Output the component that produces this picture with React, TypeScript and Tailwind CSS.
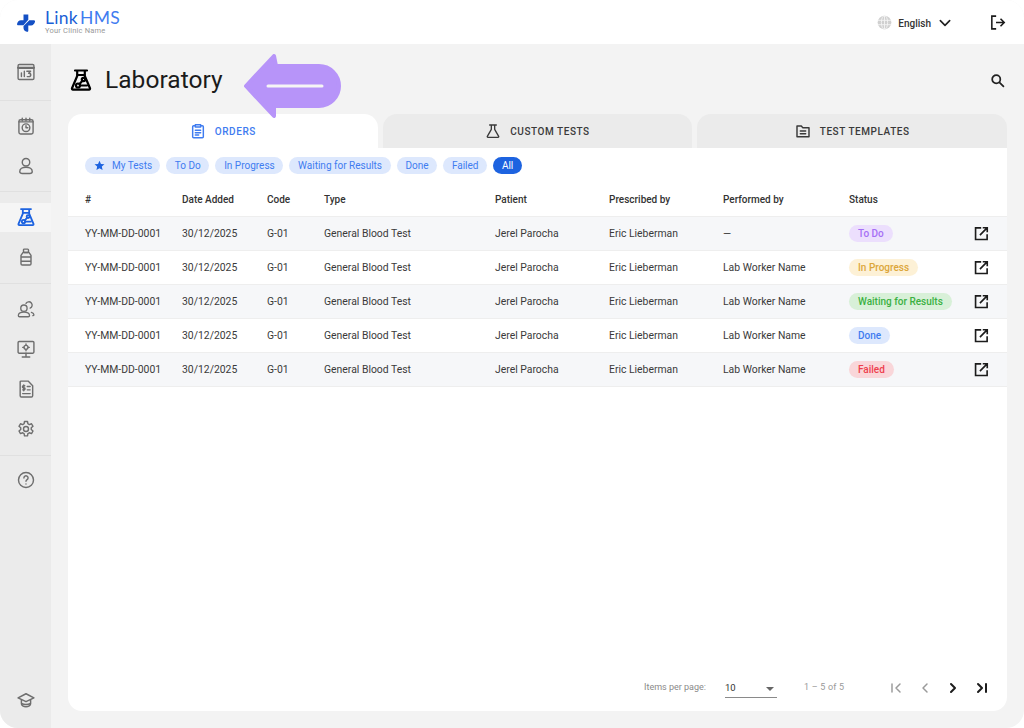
import React from "react";

type P = { className?: string };

const Svg = ({ className, children, sw = 1.8 }: P & { children: React.ReactNode; sw?: number }) => (
  <svg viewBox="0 0 24 24" fill="none" stroke="currentColor" strokeWidth={sw} strokeLinecap="round" strokeLinejoin="round" className={className}>
    {children}
  </svg>
);

const LabFlask = ({ className, sw = 2.2 }: P & { sw?: number }) => (
  <Svg className={className} sw={sw}>
    <path d="M6 2.500h12M8.200 2.500v5.500L3 20.300a1 1 0 0 0 .9 1.400h16.200a1 1 0 0 0 .9-1.400L15.800 8V2.500" />
    <path d="M8.500 7h7" />
    <circle cx="9" cy="17.500" r="2" />
    <circle cx="14.500" cy="11.500" r="1.700" />
    <path d="M10.500 16l3-3.200M11 17.500h7" />
  </Svg>
);

const navIcons = {
  chart: (
    <Svg className="w-[20px] h-[20px]" sw={1.7}>
      <rect x="2.500" y="3" width="19" height="18" rx="1.500" />
      <path d="M2.500 7h19" strokeWidth="2.600" />
      <path d="M6.500 13v4.500M10 11v6.500M13 11h4.500l-2.300 2.500c1.600 0 2.500.8 2.500 2s-1 2-2.400 2H13.500" />
    </Svg>
  ),
  clock: (
    <Svg className="w-[20px] h-[20px]" sw={1.7}>
      <rect x="3.500" y="4.500" width="17" height="17" rx="2" />
      <path d="M7.500 2.500v3M12 2.500v3M16.500 2.500v3M3.500 7h17" />
      <circle cx="12" cy="14" r="4.600" />
      <path d="M12 11.500V14h2.200" />
    </Svg>
  ),
  user: (
    <Svg className="w-[20px] h-[20px]" sw={1.7}>
      <circle cx="12" cy="7.500" r="4.500" />
      <path d="M4.500 18.500c0-3 3.200-5 7.500-5s7.500 2 7.500 5c0 1.500-1.200 2.500-3 2.500h-9c-1.800 0-3-1-3-2.500Z" />
    </Svg>
  ),
  bottle: (
    <Svg className="w-[20px] h-[20px]" sw={1.7}>
      <rect x="9" y="2.500" width="6" height="4" rx="1" />
      <path d="M8.500 6.500h7L18 10v10a1.500 1.500 0 0 1-1.500 1.500h-9A1.500 1.500 0 0 1 6 20V10ZM6 12h12M6 17h12" />
    </Svg>
  ),
  people: (
    <Svg className="w-[20px] h-[20px]" sw={1.6}>
      <circle cx="9.500" cy="11" r="3.800" />
      <path d="M2.800 20c0-2.500 2.800-4.200 6.700-4.200s6.700 1.700 6.700 4.200c0 .8-.6 1.300-1.500 1.300H4.300c-.9 0-1.500-.5-1.500-1.300Z" />
      <path d="M12 5.200A4 4 0 1 1 17 11M18.500 16c1.800.5 3 1.600 3 2.800 0 .8-.5 1.200-1.300 1.200" />
    </Svg>
  ),
  monitor: (
    <Svg className="w-[20px] h-[20px]" sw={1.7}>
      <rect x="2.500" y="3" width="19" height="14" rx="1.300" />
      <path d="M12 17v4M7.500 21.500h9" />
      <circle cx="12" cy="10" r="2.400" />
      <path d="M12 6v1.500M12 12.500V14M8 10h1.500M14.500 10H16" />
    </Svg>
  ),
  invoice: (
    <Svg className="w-[20px] h-[20px]" sw={1.7}>
      <path d="M6 2.500h8.500L20 8v12a1.500 1.500 0 0 1-1.500 1.500h-12A1.500 1.500 0 0 1 5 20V3.500a1 1 0 0 1 1-1Z" />
      <path d="M13.500 9h3.500M13.500 13h3.500M8 17.500h9M10.500 8H9a1.200 1.200 0 0 0 0 2.500h.6a1.200 1.200 0 0 1 0 2.500H8M9.300 7v7" />
    </Svg>
  ),
  gear: (
    <Svg className="w-[20px] h-[20px]" sw={1.7}>
      <circle cx="12" cy="12" r="3" />
      <path d="M10.200 3h3.600l.5 2.700 1.700 1 2.600-1 1.800 3.100-2.100 1.800v2l2.100 1.800-1.800 3.100-2.600-1-1.700 1-.5 2.700h-3.600l-.5-2.700-1.700-1-2.600 1-1.800-3.100 2.100-1.800v-2L3.600 8.800l1.800-3.100 2.600 1 1.700-1Z" />
    </Svg>
  ),
  help: (
    <Svg className="w-[20px] h-[20px]" sw={1.7}>
      <circle cx="12" cy="12" r="9" />
      <path d="M9.500 9.500a2.500 2.500 0 1 1 3.800 2.100c-.8.500-1.300 1-1.300 2" />
      <path d="M12 16.800v.1" />
    </Svg>
  ),
  cap: (
    <Svg className="w-[20px] h-[20px]" sw={1.8}>
      <path d="M12 4.500 2.500 9.500 12 14l9.500-4.500Z" />
      <path d="M6.500 12v4.500c0 1.800 2.500 3.500 5.500 3.500s5.500-1.700 5.500-3.500V12M6.500 16c3 1.500 8 1.500 11 0" />
    </Svg>
  ),
};

const NavItem = ({ icon, active }: { icon: React.ReactNode; active?: boolean }) => (
  <div className="h-10 flex items-center">
    <div className={`w-full h-[29px] flex items-center justify-center ${active ? "bg-[#f5f5f5]" : ""}`}>{icon}</div>
  </div>
);

const filters = ["To Do", "In Progress", "Waiting for Results", "Done", "Failed"];

const rows = [
  { by: "—", status: "To Do", cls: "bg-[#ecdffd] text-[#a66ff5]" },
  { by: "Lab Worker Name", status: "In Progress", cls: "bg-[#fdf1d6] text-[#dca63a]" },
  { by: "Lab Worker Name", status: "Waiting for Results", cls: "bg-[#d8f0d8] text-[#3bb043]" },
  { by: "Lab Worker Name", status: "Done", cls: "bg-[#dde8fd] text-[#3f7cf0]" },
  { by: "Lab Worker Name", status: "Failed", cls: "bg-[#f9d6d9] text-[#ee3f4d]" },
];

const cols = "grid grid-cols-[97px_85px_57px_171px_114px_114px_126px_125px_1fr] items-center pl-[17px]";

const Tab = ({ icon, label, active }: { icon: React.ReactNode; label: string; active?: boolean }) => (
  <div
    className={`flex-1 h-[34px] rounded-t-[14px] flex items-center justify-center gap-[9px] text-[10px] font-medium tracking-[0.55px] ${
      active ? "bg-white text-[#3f7cf0]" : "bg-[#ebebeb] text-[#3a3a3a]"
    }`}
  >
    {icon}
    <span className="pt-[1px]">{label}</span>
  </div>
);

export default function App() {
  return (
    <div className="w-[1024px] h-[728px] bg-white overflow-hidden relative" style={{ fontFamily: "Roboto, sans-serif" }}>
      <div className="w-full h-full rounded-[18px] overflow-hidden flex flex-col bg-[#f3f3f3]">
        <header className="h-[44px] bg-white flex items-center shrink-0">
          <div className="flex items-center ml-[17px]">
            <svg viewBox="0 0 18 18" className="w-[18px] h-[18px] mt-[1px]">
              <path d="M6.500 0.500h4.800v5.200L6.500 11.300H1.300c-.9 0-1.400-.7-1.200-1.500C.5 7.900 1.900 6.200 4 6.200h2.500Z" fill="#1450c4" />
              <path d="M12.300 6.300h4.600c.9 0 1.300.6 1.100 1.400-.5 2-1.900 3.700-4 3.700h-2.700v5.300c0 .9-.7 1.400-1.500 1.100-1.900-.6-3.300-2-3.300-3.900v-2Z" fill="#1450c4" />
            </svg>
            <div className="ml-[10px] flex flex-col">
              <div className="text-[17.500px] leading-[17px] tracking-[0.3px]" style={{ fontFamily: "Lato, sans-serif" }}>
                <span className="text-[#1b5fd6]">Link</span>
                <span className="text-[#3f7cf0] ml-[2px]">HMS</span>
              </div>
              <div className="text-[7.500px] leading-[9px] tracking-[0.2px] text-[#9a9a9a]">Your Clinic Name</div>
            </div>
          </div>
          <div className="ml-auto flex items-center pt-[1px]">
            <svg viewBox="0 0 24 24" className="w-[15px] h-[15px]" fill="none" strokeWidth="1.500">
              <circle cx="12" cy="12" r="11" fill="#d0d0d0" />
              <ellipse cx="12" cy="12" rx="5" ry="11" stroke="#f3f3f3" />
              <path d="M1 8.500h22M1 15.500h22M12 1v22" stroke="#f3f3f3" />
            </svg>
            <span className="ml-[6px] text-[10px] font-medium text-[#333] pt-[1px]">English</span>
            <svg viewBox="0 0 24 24" className="ml-[7px] w-[14px] h-[14px] text-[#222]" fill="none" stroke="currentColor" strokeWidth="2.800" strokeLinecap="round" strokeLinejoin="round">
              <path d="M4 8l8 8 8-8" />
            </svg>
            <svg viewBox="0 0 24 24" className="ml-[37px] mr-[18px] w-[17px] h-[17px] text-[#1c1c1c]" fill="none" stroke="currentColor" strokeWidth="2.200" strokeLinecap="square" strokeLinejoin="miter">
              <path d="M9 3H4v18h5M11 12h10M17 7.500l4.500 4.500-4.500 4.500" />
            </svg>
          </div>
        </header>

        <div className="flex-1 flex min-h-0">
          <aside className="w-[51px] shrink-0 bg-[#ebebeb] flex flex-col text-[#6e6e6e]">
            <div className="h-[57px] border-b border-[#e0e0e0] flex items-center justify-center">{navIcons.chart}</div>
            <div className="pt-[5px] pb-[5px] border-b border-[#e0e0e0]">
              <NavItem icon={navIcons.clock} />
              <NavItem icon={navIcons.user} />
            </div>
            <div className="pt-[5px] pb-[6px] border-b border-[#e0e0e0]">
              <NavItem active icon={<LabFlask className="w-[20px] h-[20px] text-[#1d63e0]" />} />
              <NavItem icon={navIcons.bottle} />
            </div>
            <div className="pt-[5px] pb-[6px] border-b border-[#e0e0e0]">
              <NavItem icon={navIcons.people} />
              <NavItem icon={navIcons.monitor} />
              <NavItem icon={navIcons.invoice} />
              <NavItem icon={navIcons.gear} />
            </div>
            <div className="pt-[4px]">
              <NavItem icon={navIcons.help} />
            </div>
            <div className="mt-auto pb-[8px]">
              <NavItem icon={navIcons.cap} />
            </div>
          </aside>

          <main className="flex-1 min-w-0 pl-[17px] pr-[17px] pb-[17px] flex flex-col">
            <div className="h-[70px] shrink-0 flex items-center pt-[2px]">
              <LabFlask className="w-[24px] h-[24px] text-black ml-[1px]" />
              <h1 className="ml-[12px] text-[24.500px] leading-[32px] font-normal text-[#1b1b1b] tracking-[0.05px]">Laboratory</h1>
              <svg viewBox="0 0 24 24" className="ml-auto mr-[2px] w-[15px] h-[15px] text-[#222]" fill="none" stroke="currentColor" strokeWidth="2.800" strokeLinecap="round">
                <circle cx="10" cy="10" r="6.500" />
                <path d="M15 15l6.500 6.500" />
              </svg>
            </div>

            <div className="flex gap-[5px] shrink-0">
              <Tab
                active
                label="ORDERS"
                icon={
                  <svg viewBox="0 0 24 24" className="w-[16px] h-[16px]" fill="none" stroke="currentColor" strokeWidth="2.200" strokeLinejoin="round" strokeLinecap="round">
                    <path d="M8 4H5.500A1.500 1.500 0 0 0 4 5.500v15A1.500 1.500 0 0 0 5.500 22h13a1.500 1.500 0 0 0 1.500-1.500v-15A1.500 1.500 0 0 0 18.500 4H16" />
                    <path d="M8 2.500h8v3.500H8ZM8 11h8M8 14.500h8M8 18h5" />
                  </svg>
                }
              />
              <Tab
                label="CUSTOM TESTS"
                icon={
                  <svg viewBox="0 0 24 24" className="w-[16px] h-[16px]" fill="none" stroke="currentColor" strokeWidth="2" strokeLinejoin="round" strokeLinecap="round">
                    <path d="M7 3h10M9.500 3v6.500L3.500 20a1 1 0 0 0 .9 1.500h15.200a1 1 0 0 0 .9-1.500L14.500 9.500V3" />
                  </svg>
                }
              />
              <Tab
                label="TEST TEMPLATES"
                icon={
                  <svg viewBox="0 0 24 24" className="w-[16px] h-[16px]" fill="none" stroke="currentColor" strokeWidth="2.200" strokeLinejoin="round" strokeLinecap="round">
                    <path d="M3 4.500h6.500l2 2.500H21v13.500H3ZM8 12h8M8 16h8" />
                  </svg>
                }
              />
            </div>

            <div className="flex-1 min-h-0 bg-white rounded-b-[14px] flex flex-col">
              <div className="flex items-center gap-[6px] pl-[17px] h-[34px] shrink-0">
                <span className="h-[17px] pl-[9px] pr-[8px] rounded-full bg-[#dde8fd] text-[#3f7cf0] text-[10px] flex items-center gap-[7px]">
                  <svg viewBox="0 0 24 24" className="w-[11px] h-[11px]" fill="#1d63e0">
                    <path d="M12 1.500l3.200 7 7.600.8-5.700 5.100 1.600 7.500L12 18.100l-6.700 3.800 1.600-7.500L1.200 9.300l7.600-.8Z" />
                  </svg>
                  My Tests
                </span>
                {filters.map((f) => (
                  <span key={f} className="h-[17px] px-[8.700px] rounded-full bg-[#dde8fd] text-[#3f7cf0] text-[10px] flex items-center">
                    {f}
                  </span>
                ))}
                <span className="h-[17px] px-[8.700px] rounded-full bg-[#1d63e0] text-white text-[10px] flex items-center">All</span>
              </div>

              <div className={`${cols} h-[34px] text-[10px] font-medium text-[#333] pt-[1px] shrink-0`}>
                <span>#</span>
                <span>Date Added</span>
                <span>Code</span>
                <span>Type</span>
                <span>Patient</span>
                <span>Prescribed by</span>
                <span>Performed by</span>
                <span>Status</span>
                <span />
              </div>

              {rows.map((r, i) => (
                <div key={r.status} className={`${cols} shrink-0 border-t border-[#eeeeee] text-[10.400px] text-[#3a3a3a] ${i % 2 === 0 ? "bg-[#f6f7f9]" : "bg-white"} ${i === 4 ? "border-b h-[35px]" : "h-[34px]"}`}>
                  <span>YY-MM-DD-0001</span>
                  <span>30/12/2025</span>
                  <span>G-01</span>
                  <span>General Blood Test</span>
                  <span>Jerel Parocha</span>
                  <span>Eric Lieberman</span>
                  <span>{r.by}</span>
                  <span>
                    <span className={`inline-flex items-center h-[17px] px-[9px] rounded-full text-[10px] font-medium ${r.cls}`}>{r.status}</span>
                  </span>
                  <svg viewBox="0 0 24 24" className="w-[15px] h-[15px] text-[#1c1c1c]" fill="none" stroke="currentColor" strokeWidth="2.600" strokeLinecap="butt" strokeLinejoin="miter">
                    <path d="M11.500 3H2.500v18.500H21V13M9.500 14.500 20.500 3.500M14 2.800h7.200V10" />
                  </svg>
                </div>
              ))}

              <div className="mt-auto h-[46px] shrink-0 flex items-center pl-[576px] text-[9px] text-[#8a8a8a]">
                <span className="w-[81px]">Items per page:</span>
                <span className="w-[52px] h-[18px] border-b border-[#8a8a8a] flex items-center justify-between text-[#333] text-[9.500px] pr-[3px] mt-[2px]">
                  10
                  <span className="w-0 h-0 border-l-[4px] border-r-[4px] border-t-[4px] border-l-transparent border-r-transparent border-t-[#666]" />
                </span>
                <span className="ml-[27px] w-[84px] text-[#9a9a9a] tracking-[0.2px]">1 – 5 of 5</span>
                <svg viewBox="0 0 24 24" className="w-[16px] h-[16px] text-[#9a9a9a]" fill="none" stroke="currentColor" strokeWidth="2.200" strokeLinecap="round" strokeLinejoin="round"><path d="M6 6v12M18 6l-6 6 6 6" /></svg>
                <svg viewBox="0 0 24 24" className="ml-[12.700px] w-[16px] h-[16px] text-[#9a9a9a]" fill="none" stroke="currentColor" strokeWidth="2.200" strokeLinecap="round" strokeLinejoin="round"><path d="M15 6l-6 6 6 6" /></svg>
                <svg viewBox="0 0 24 24" className="ml-[12.700px] w-[16px] h-[16px] text-[#1c1c1c]" fill="none" stroke="currentColor" strokeWidth="3" strokeLinecap="round" strokeLinejoin="round"><path d="M9 6l6 6-6 6" /></svg>
                <svg viewBox="0 0 24 24" className="ml-[12.700px] w-[16px] h-[16px] text-[#1c1c1c]" fill="none" stroke="currentColor" strokeWidth="3" strokeLinecap="round" strokeLinejoin="round"><path d="M6 6l6 6-6 6M18 6v12" /></svg>
              </div>
            </div>
          </main>
        </div>
      </div>

      <svg viewBox="0 0 100 66" className="absolute left-[243px] top-[53px] w-[100px] h-[66px]">
        <path d="M31 3 3 33l28 30V53h45a20 20 0 0 0 0-40H33Z" fill="#b794f9" stroke="#b794f9" strokeWidth="4" strokeLinejoin="round" />
        <path d="M25 33h54" stroke="#f5f5f5" strokeWidth="3" strokeLinecap="round" />
      </svg>
    </div>
  );
}
